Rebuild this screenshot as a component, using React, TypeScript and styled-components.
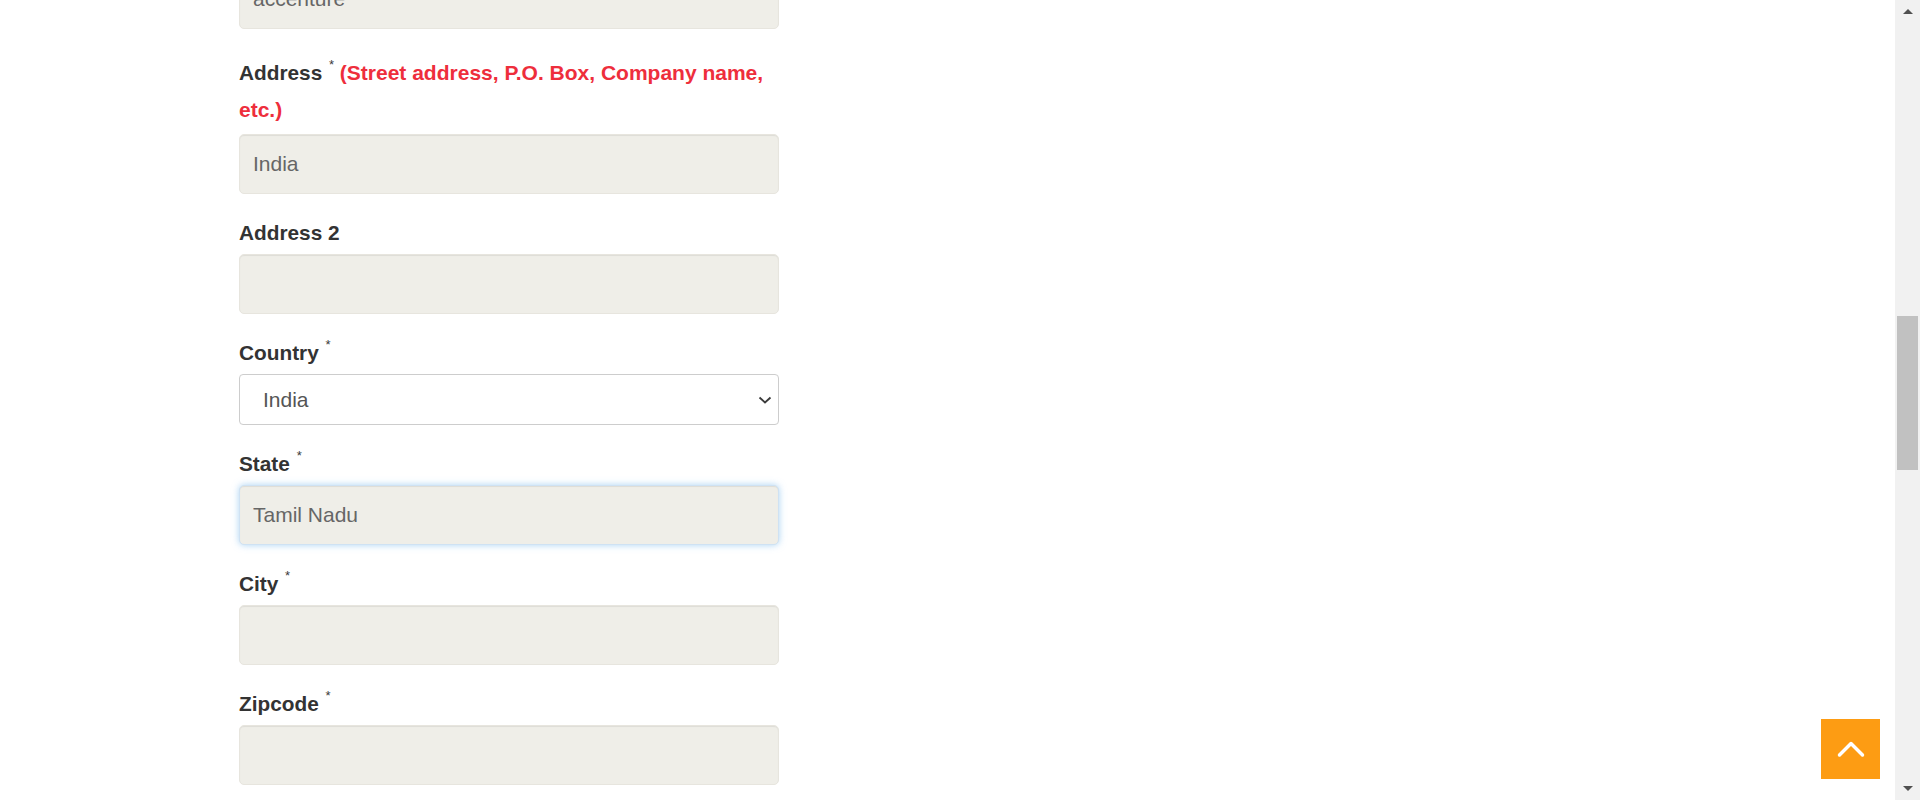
import React from "react";
import styled, { createGlobalStyle } from "styled-components";

const GlobalStyle = createGlobalStyle`
  html, body {
    margin: 0;
    padding: 0;
    overflow: hidden;
    background: #ffffff;
  }
  body {
    font-family: "Liberation Sans", Arial, sans-serif;
  }
`;

const Page = styled.div`
  height: 800px;
  overflow: hidden;
  padding-left: 239px;
`;

const Form = styled.form`
  width: 540px;
  margin-top: -31px;
  display: flex;
  flex-direction: column;
`;

const Group = styled.div`
  display: flex;
  flex-direction: column;
  margin-top: 20px;
  &:first-child {
    margin-top: 0;
  }
`;

const Label = styled.label<{ $pad?: boolean }>`
  font-size: 20.8px;
  font-weight: 700;
  color: #333333;
  line-height: 37px;
  margin-bottom: 3px;
  padding: ${(p) => (p.$pad ? "5px 0 3px" : "0")};
`;

const Req = styled.sup`
  font-size: 13px;
  font-weight: 400;
  line-height: 0;
  vertical-align: 11px;
  color: #3a3a3a;
  margin-left: 1px;
`;

const Hint = styled.span`
  color: #ee2e3c;
  font-size: 21px;
`;

const Input = styled.input<{ $focus?: boolean }>`
  box-sizing: border-box;
  width: 100%;
  height: 60px;
  padding: 0 13px;
  font: 21px "Liberation Sans", Arial, sans-serif;
  color: #666666;
  background: #efeee8;
  border: 1px solid ${(p) => (p.$focus ? "#cfe2f3" : "#e7e5de")};
  border-radius: 5px;
  box-shadow: ${(p) =>
    p.$focus
      ? "inset 0 1px 1px rgba(0,0,0,0.075), 0 0 7px rgba(102,175,233,0.55)"
      : "inset 0 1px 1px rgba(0,0,0,0.075)"};
  outline: none;
`;

const SelectWrap = styled.div`
  position: relative;
`;

const Select = styled.select`
  appearance: none;
  -webkit-appearance: none;
  box-sizing: border-box;
  width: 100%;
  height: 51px;
  padding: 0 40px 0 23px;
  font: 21px "Liberation Sans", Arial, sans-serif;
  color: #555555;
  background: #ffffff;
  border: 1px solid #cdcdcd;
  border-radius: 4px;
  outline: none;
`;

const SelectArrow = styled.svg`
  position: absolute;
  right: 7px;
  top: 50%;
  transform: translateY(-50%);
  pointer-events: none;
`;

const ToTop = styled.button`
  position: fixed;
  right: 40px;
  bottom: 21px;
  width: 59px;
  height: 60px;
  border: none;
  padding: 0;
  background: #fd9c13;
  display: flex;
  align-items: center;
  justify-content: center;
  cursor: pointer;
`;

const ScrollTrack = styled.div`
  position: fixed;
  top: 0;
  right: 0;
  width: 25px;
  height: 100%;
  background: #f1f1f1;
`;

const ScrollThumb = styled.div`
  position: absolute;
  top: 316px;
  left: 2px;
  right: 2px;
  height: 154px;
  background: #c1c1c1;
`;

const ScrollArrow = styled.div<{ $down?: boolean }>`
  position: absolute;
  left: 50%;
  transform: translateX(-50%);
  width: 0;
  height: 0;
  border-left: 5px solid transparent;
  border-right: 5px solid transparent;
  ${(p) =>
    p.$down
      ? "bottom: 9px; border-top: 5px solid #505050;"
      : "top: 9px; border-bottom: 5px solid #505050;"}
`;

export default function App() {
  return (
    <>
      <GlobalStyle />
      <Page>
        <Form onSubmit={(e) => e.preventDefault()}>
          <Group>
            <Input defaultValue="accenture" />
          </Group>

          <Group>
            <Label $pad>
              Address <Req>*</Req>{" "}
              <Hint>(Street address, P.O. Box, Company name, etc.)</Hint>
            </Label>
            <Input defaultValue="India" />
          </Group>

          <Group>
            <Label>Address 2</Label>
            <Input defaultValue="" />
          </Group>

          <Group>
            <Label>
              Country <Req>*</Req>
            </Label>
            <SelectWrap>
              <Select defaultValue="India">
                <option value="India">India</option>
              </Select>
              <SelectArrow width="14" height="10" viewBox="0 0 14 10">
                <polyline
                  points="1.5,2.5 7,7.5 12.5,2.5"
                  fill="none"
                  stroke="#3a3a3a"
                  strokeWidth="1.8"
                />
              </SelectArrow>
            </SelectWrap>
          </Group>

          <Group>
            <Label>
              State <Req>*</Req>
            </Label>
            <Input $focus defaultValue="Tamil Nadu" />
          </Group>

          <Group>
            <Label>
              City <Req>*</Req>
            </Label>
            <Input defaultValue="" />
          </Group>

          <Group>
            <Label>
              Zipcode <Req>*</Req>
            </Label>
            <Input defaultValue="" />
          </Group>
        </Form>
      </Page>

      <ToTop aria-label="Back to top">
        <svg width="28" height="18" viewBox="0 0 28 18">
          <polyline
            points="2.5,15 14,3.5 25.5,15"
            fill="none"
            stroke="#ffffff"
            strokeWidth="3.5"
            strokeLinecap="round"
            strokeLinejoin="round"
          />
        </svg>
      </ToTop>

      <ScrollTrack>
        <ScrollArrow />
        <ScrollThumb />
        <ScrollArrow $down />
      </ScrollTrack>
    </>
  );
}
